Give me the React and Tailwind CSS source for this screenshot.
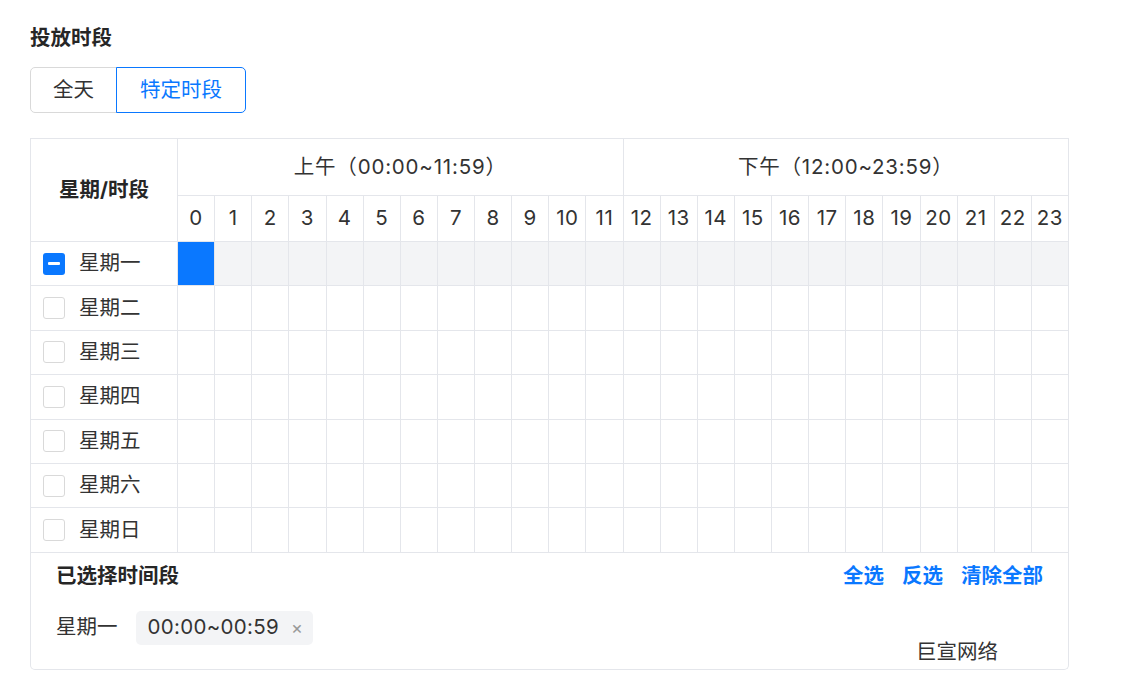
import { useState } from 'react'

const DAYS = ['星期一', '星期二', '星期三', '星期四', '星期五', '星期六', '星期日']
const HOURS = Array.from({ length: 24 }, (_, i) => i)

const pad = (n) => String(n).padStart(2, '0')

function Checkbox({ state, onClick }) {
  if (state === 'none') {
    return (
      <span
        onClick={onClick}
        className="w-[22px] h-[22px] rounded-[3px] border border-[#d9d9d9] bg-white inline-block cursor-pointer"
      />
    )
  }
  return (
    <span
      onClick={onClick}
      className="w-[22px] h-[22px] rounded-[3px] bg-[#0a78ff] flex items-center justify-center cursor-pointer"
    >
      {state === 'some' ? (
        <span className="w-[12px] h-[3px] bg-white rounded-[1px]" />
      ) : (
        <svg width="14" height="14" viewBox="0 0 14 14" fill="none">
          <path d="M2.5 7.2 5.6 10.2 11.5 4" stroke="white" strokeWidth="2" />
        </svg>
      )}
    </span>
  )
}

export default function App() {
  const [mode, setMode] = useState('custom')
  const [picked, setPicked] = useState({ 0: [0] })

  const toggleCell = (d, h) => {
    setPicked((prev) => {
      const cur = prev[d] || []
      const next = cur.includes(h) ? cur.filter((x) => x !== h) : [...cur, h].sort((a, b) => a - b)
      return { ...prev, [d]: next }
    })
  }

  const toggleDay = (d) => {
    setPicked((prev) => {
      const cur = prev[d] || []
      return { ...prev, [d]: cur.length === 24 ? [] : [...HOURS] }
    })
  }

  const selectAll = () => setPicked(Object.fromEntries(DAYS.map((_, d) => [d, [...HOURS]])))
  const invert = () =>
    setPicked((prev) =>
      Object.fromEntries(DAYS.map((_, d) => [d, HOURS.filter((h) => !(prev[d] || []).includes(h))]))
    )
  const clearAll = () => setPicked({})

  // collapse consecutive hours into ranges for the summary tags
  const ranges = (hours) => {
    const out = []
    hours.forEach((h) => {
      const last = out[out.length - 1]
      if (last && last[1] === h - 1) last[1] = h
      else out.push([h, h])
    })
    return out
  }

  const removeRange = (d, [a, b]) =>
    setPicked((prev) => ({ ...prev, [d]: (prev[d] || []).filter((h) => h < a || h > b) }))

  const font = { fontFamily: 'Inter, "Noto Sans CJK SC", sans-serif' }

  return (
    <div className="min-h-screen bg-white pl-[30px] pt-[24px] text-[#333]" style={font}>
      <h3 className="text-[20.5px] leading-[28px] font-bold text-[#262626]">投放时段</h3>

      <div className="mt-[15px] flex">
        <button
          onClick={() => setMode('all')}
          className={`h-[46px] px-[22px] text-[20.5px] rounded-l-[5px] border ${
            mode === 'all' ? 'border-[#0a78ff] text-[#0a78ff] z-10' : 'border-[#d9d9d9] text-[#333]'
          }`}
        >
          全天
        </button>
        <button
          onClick={() => setMode('custom')}
          className={`h-[46px] px-[23px] text-[20.5px] rounded-r-[5px] border -ml-px ${
            mode === 'custom' ? 'border-[#0a78ff] text-[#0a78ff] z-10' : 'border-[#d9d9d9] text-[#333]'
          }`}
        >
          特定时段
        </button>
      </div>

      <div className="mt-[25px] w-[1039px]">
        <table className="w-[1039px] table-fixed border-collapse text-[20.5px]">
          <colgroup>
            <col className="w-[147px]" />
            {HOURS.map((h) => (
              <col key={h} />
            ))}
          </colgroup>
          <thead>
            <tr className="h-[57px]">
              <th rowSpan={2} className="border border-[#e4e6eb] font-bold text-[#262626]">
                星期/时段
              </th>
              <th colSpan={12} className="border border-[#e4e6eb] font-normal tracking-[0.8px]">
                上午（00:00~11:59）
              </th>
              <th colSpan={12} className="border border-[#e4e6eb] font-normal tracking-[0.8px]">
                下午（12:00~23:59）
              </th>
            </tr>
            <tr className="h-[46px]">
              {HOURS.map((h) => (
                <th key={h} className="border border-[#e4e6eb] font-normal p-0 tracking-[0.5px]">
                  {h}
                </th>
              ))}
            </tr>
          </thead>
          <tbody>
            {DAYS.map((day, d) => {
              const hours = picked[d] || []
              const state = hours.length === 0 ? 'none' : hours.length === 24 ? 'all' : 'some'
              return (
                <tr key={day} className={`h-[44.4px] ${state !== 'none' ? 'bg-[#f3f4f6]' : ''}`}>
                  <td className="border border-[#e4e6eb] bg-white pl-[12px]">
                    <div className="flex items-center gap-[14px]">
                      <Checkbox state={state} onClick={() => toggleDay(d)} />
                      <span>{day}</span>
                    </div>
                  </td>
                  {HOURS.map((h) => (
                    <td
                      key={h}
                      onClick={() => toggleCell(d, h)}
                      className={`border border-[#e4e6eb] cursor-pointer ${
                        hours.includes(h) ? 'bg-[#0a78ff]' : ''
                      }`}
                    />
                  ))}
                </tr>
              )
            })}
          </tbody>
        </table>

        <div className="relative border-x border-b border-[#e4e6eb] rounded-b-[5px] px-[25px] pt-[10px] pb-[24px]">
          <div className="flex items-center justify-between h-[28px]">
            <span className="text-[20.5px] font-bold text-[#262626]">已选择时间段</span>
            <div className="flex gap-[18px] text-[20.5px] font-bold text-[#0a78ff]">
              <button onClick={selectAll}>全选</button>
              <button onClick={invert}>反选</button>
              <button onClick={clearAll}>清除全部</button>
            </div>
          </div>

          <div className="mt-[20px] flex flex-col gap-[10px]">
            {DAYS.map((day, d) =>
              (picked[d] || []).length ? (
                <div key={day} className="flex items-center gap-[18px]">
                  <span className="text-[20.5px]">{day}</span>
                  <div className="flex flex-wrap gap-[8px]">
                    {ranges(picked[d]).map((r) => (
                      <span
                        key={r[0]}
                        className="h-[34px] pl-[12px] pr-[10px] rounded-[5px] bg-[#f3f4f6] flex items-center gap-[12px] text-[20.5px] tracking-[0.3px]"
                      >
                        {pad(r[0])}:00~{pad(r[1])}:59
                        <button
                          onClick={() => removeRange(d, r)}
                          className="text-[#999] text-[18px] leading-none"
                        >
                          ×
                        </button>
                      </span>
                    ))}
                  </div>
                </div>
              ) : null
            )}
          </div>

          <span
            className="absolute right-[70px] bottom-[3px] text-[20.5px] text-[#333] pointer-events-none"
            style={{ fontFamily: '"Noto Sans CJK SC", sans-serif' }}
          >
            巨宣网络
          </span>
        </div>
      </div>
    </div>
  )
}
